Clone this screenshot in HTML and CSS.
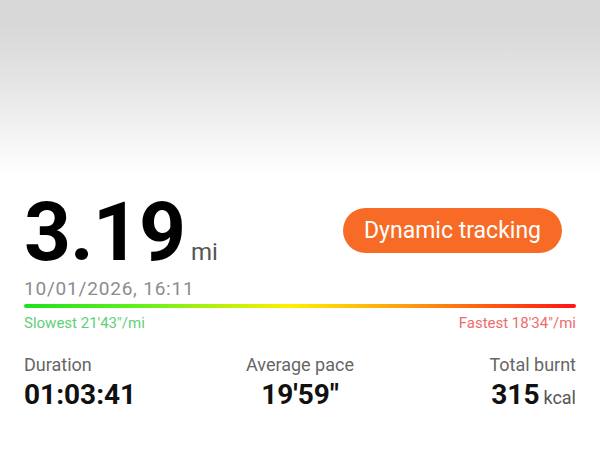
FILE: index.html
```html
<!DOCTYPE html>
<html lang="en">
<head>
  <meta charset="UTF-8">
  <meta name="viewport" content="width=device-width, initial-scale=1.0">
  <title>Workout record</title>
  <link rel="stylesheet" href="styles.css">
</head>
<body>

  <div class="record">
    <div class="summary">
      <div class="distance">
        <span class="distance-value">3.19</span>
        <span class="distance-unit">mi</span>
      </div>
      <button class="track-button">Dynamic tracking</button>
    </div>

    <div class="date">10/01/2026, 16:11</div>

    <div class="pace-bar"></div>
    <div class="pace-labels">
      <span class="slowest">Slowest 21'43"/mi</span>
      <span class="fastest">Fastest 18'34"/mi</span>
    </div>

    <div class="stats">
      <div class="stat">
        <div class="stat-label">Duration</div>
        <div class="stat-value">01:03:41</div>
      </div>
      <div class="stat stat-center">
        <div class="stat-label">Average pace</div>
        <div class="stat-value">19'59"</div>
      </div>
      <div class="stat stat-right">
        <div class="stat-label">Total burnt</div>
        <div class="stat-value">315 <span class="stat-unit">kcal</span></div>
      </div>
    </div>
  </div>

</body>
</html>
```

FILE: styles.css
```css
body {
  font-family: Roboto, "Liberation Sans", sans-serif;
  margin: 0;
  min-height: 450px;
  background: linear-gradient(180deg, #d8d8d8 25px, #e4e4e4 80px, #ffffff 175px);
  color: #111;
}

.record {
  padding: 191px 24px 0 24px;
}

.summary {
  display: flex;
  justify-content: space-between;
  align-items: center;
}

.distance {
  display: flex;
  align-items: baseline;
}

.distance-value {
  font-size: 82px;
  font-weight: bold;
  line-height: 82px;
  letter-spacing: -1px;
  color: #000;
}

.distance-unit {
  font-size: 24px;
  color: #555;
  margin-left: 6px;
}

.track-button {
  font-family: inherit;
  background: #f76b26;
  color: #fff;
  border: none;
  border-radius: 23px;
  height: 45px;
  padding: 0 21px;
  font-size: 23px;
  margin-right: 14px;
  margin-top: -3px;
}

.date {
  margin-top: 5px;
  font-size: 19px;
  line-height: 22px;
  color: #8c8c8c;
  letter-spacing: 0.8px;
}

.pace-bar {
  margin-top: 4px;
  height: 4px;
  border-radius: 2px;
  background: linear-gradient(90deg, #1fe01f 0%, #5ef01a 20%, #fff000 48%, #ff9a10 70%, #ff1414 100%);
}

.pace-labels {
  display: flex;
  justify-content: space-between;
  margin-top: 6px;
  font-size: 15px;
  line-height: 18px;
}

.slowest {
  color: #5fcf7a;
}

.fastest {
  color: #ee6b6b;
}

.stats {
  display: grid;
  grid-template-columns: 1fr 1fr 1fr;
  margin-top: 22px;
}

.stat-center {
  text-align: center;
}

.stat-right {
  text-align: right;
}

.stat-label {
  font-size: 18px;
  line-height: 22px;
  color: #666;
}

.stat-value {
  margin-top: 2px;
  font-size: 28px;
  line-height: 34px;
  font-weight: bold;
  color: #111;
}

.stat-unit {
  font-size: 18px;
  font-weight: normal;
  color: #555;
  margin-left: -3px;
}
```
